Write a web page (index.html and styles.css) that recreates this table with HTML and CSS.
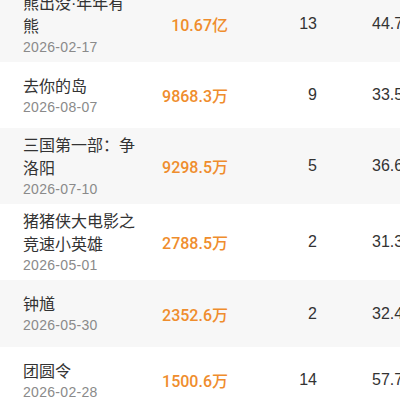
FILE: index.html
```html
<!DOCTYPE html>
<html lang="zh-CN">
<head>
<meta charset="utf-8">
<title>票房榜</title>
<link rel="stylesheet" href="styles.css">
</head>
<body>
<div class="list">
  <div class="row alt">
    <div class="film"><div class="name">熊出没·年年有熊</div><div class="date">2026-02-17</div></div>
    <div class="amount">10.67亿</div>
    <div class="count">13</div>
    <div class="rate">44.72</div>
  </div>
  <div class="row">
    <div class="film"><div class="name">去你的岛</div><div class="date">2026-08-07</div></div>
    <div class="amount">9868.3万</div>
    <div class="count">9</div>
    <div class="rate">33.51</div>
  </div>
  <div class="row alt">
    <div class="film"><div class="name">三国第一部：争洛阳</div><div class="date">2026-07-10</div></div>
    <div class="amount">9298.5万</div>
    <div class="count">5</div>
    <div class="rate">36.62</div>
  </div>
  <div class="row">
    <div class="film"><div class="name">猪猪侠大电影之竞速小英雄</div><div class="date">2026-05-01</div></div>
    <div class="amount">2788.5万</div>
    <div class="count">2</div>
    <div class="rate">31.36</div>
  </div>
  <div class="row alt">
    <div class="film"><div class="name">钟馗</div><div class="date">2026-05-30</div></div>
    <div class="amount">2352.6万</div>
    <div class="count">2</div>
    <div class="rate">32.45</div>
  </div>
  <div class="row">
    <div class="film"><div class="name">团圆令</div><div class="date">2026-02-28</div></div>
    <div class="amount">1500.6万</div>
    <div class="count">14</div>
    <div class="rate">57.73</div>
  </div>
</div>
</body>
</html>
```
FILE: styles.css
```css
html, body {
  margin: 0;
  padding: 0;
  background: #fff;
  overflow: hidden;
}
body {
  width: 400px;
  height: 400px;
  font-family: "Liberation Sans", "Noto Sans CJK SC", sans-serif;
}
.list {
  margin-top: -14px;
}
.row {
  display: grid;
  grid-template-columns: 116px 89px 89px auto;
  align-items: center;
  min-height: 66px;
  padding: 6px 0 6px 23px;
  box-sizing: border-box;
  background: #fff;
  white-space: nowrap;
}
.row.alt {
  background: #f7f7f7;
  min-height: 67px;
}
.film {
  white-space: normal;
}
.name {
  font-size: 16px;
  line-height: 23px;
  color: #333;
}
.date {
  font-size: 14px;
  line-height: 18px;
  color: #8a8a8a;
  letter-spacing: 0.3px;
}
.amount {
  text-align: right;
  font-family: Roboto, "Noto Sans CJK SC", sans-serif;
  font-size: 16px;
  font-weight: 500;
  color: #ef8d2d;
}
.count {
  text-align: right;
  font-size: 16px;
  color: #333;
}
.rate {
  margin-left: 55px;
  font-size: 16px;
  color: #333;
}
```
